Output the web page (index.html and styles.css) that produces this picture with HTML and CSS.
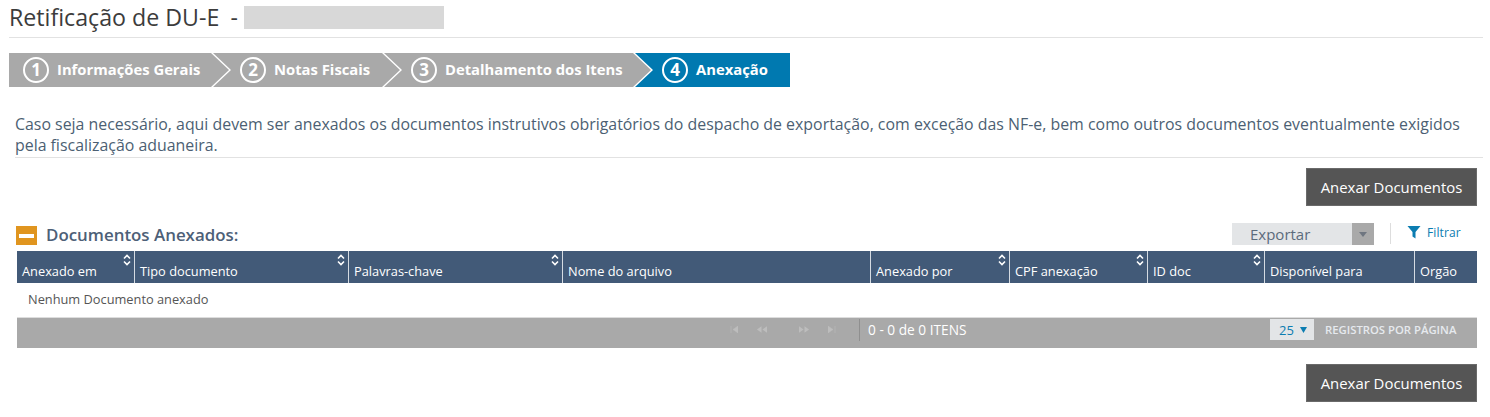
FILE: index.html
```html
<!DOCTYPE html>
<html lang="pt-BR">
<head>
<meta charset="utf-8">
<title>Retificação de DU-E</title>
<link rel="stylesheet" href="styles.css">
</head>
<body>
<svg class="defs" width="0" height="0" aria-hidden="true">
  <symbol id="sort" viewBox="0 0 8 12"><path d="M1 4.500 4 1.500 7 4.500M1 7.500 4 10.500 7 7.500" fill="none" stroke="#fff" stroke-width="1.6"/></symbol>
</svg>
<header class="page-title">
  <h1>Retificação de DU-E</h1><span class="dash">-</span><span class="redacted"></span>
</header>
<nav class="steps">
  <div class="step step-1"><span class="num">1</span><span>Informações Gerais</span></div>
  <div class="step step-2"><span class="num">2</span><span>Notas Fiscais</span></div>
  <div class="step step-3"><span class="num">3</span><span>Detalhamento dos Itens</span></div>
  <div class="step step-4"><span class="num">4</span><span>Anexação</span></div>
</nav>
<p class="intro">Caso seja necessário, aqui devem ser anexados os documentos instrutivos obrigatórios do despacho de exportação, com exceção das NF-e, bem como outros documentos eventualmente exigidos pela fiscalização aduaneira.</p>
<div class="actions"><button class="btn">Anexar Documentos</button></div>
<section class="docs">
  <div class="docs-head">
    <span class="collapse"><span></span></span>
    <h2>Documentos Anexados:</h2>
    <div class="export"><span class="export-label">Exportar</span><span class="export-arrow"><svg width="8" height="5" viewBox="0 0 8 5"><path d="M0 0h8L4 5z" fill="#6f7680"/></svg></span></div>
    <span class="vsep"></span>
    <a class="filter"><svg width="14" height="14" viewBox="0 0 14 14"><path d="M0.500 1h13L8.500 7v6.500L5.500 11.500V7z" fill="#0c7db1"/></svg>Filtrar</a>
  </div>
  <table class="grid">
    <colgroup><col class="c1"><col class="c2"><col class="c3"><col class="c4"><col class="c5"><col class="c6"><col class="c7"><col class="c8"><col class="c9"></colgroup>
    <thead>
      <tr>
        <th>Anexado em<svg class="sort"><use href="#sort"/></svg></th>
        <th>Tipo documento<svg class="sort"><use href="#sort"/></svg></th>
        <th>Palavras-chave<svg class="sort"><use href="#sort"/></svg></th>
        <th>Nome do arquivo</th>
        <th>Anexado por<svg class="sort"><use href="#sort"/></svg></th>
        <th>CPF anexação<svg class="sort"><use href="#sort"/></svg></th>
        <th>ID doc<svg class="sort"><use href="#sort"/></svg></th>
        <th>Disponível para</th>
        <th>Orgão</th>
      </tr>
    </thead>
    <tbody><tr><td colspan="9">Nenhum Documento anexado</td></tr></tbody>
  </table>
  <div class="pager">
    <div class="pager-nav">
      <svg width="8" height="7" viewBox="0 0 8 7"><path d="M1 0v7M8 0v7L3 3.500z" fill="#bdbdbd" stroke="#bdbdbd" stroke-width=".5"/></svg>
      <svg width="11" height="7" viewBox="0 0 12 7"><path d="M6 0v7L1 3.500zM12 0v7L7 3.500z" fill="#bdbdbd"/></svg>
      <svg class="gap" width="11" height="7" viewBox="0 0 12 7"><path d="M0 0v7l5-3.500zM6 0v7l5-3.500z" fill="#bdbdbd"/></svg>
      <svg width="8" height="7" viewBox="0 0 8 7"><path d="M0 0v7l5-3.500zM7 0v7" fill="#bdbdbd" stroke="#bdbdbd" stroke-width=".5"/></svg>
    </div>
    <div class="pager-info">0 - 0 de 0 ITENS</div>
    <div class="page-size"><span>25</span><svg width="7" height="6" viewBox="0 0 7 6"><path d="M0 0h7L3.500 6z" fill="#0c7db1"/></svg></div>
    <div class="page-label">REGISTROS POR PÁGINA</div>
  </div>
</section>
<div class="actions actions-bottom"><button class="btn">Anexar Documentos</button></div>
</body>
</html>
```
FILE: styles.css
```css
* { box-sizing: border-box; }
html, body { margin: 0; padding: 0; }
body {
  width: 1490px;
  height: 417px;
  overflow: hidden;
  background: #fff;
  font-family: "Open Sans", "Liberation Sans", sans-serif;
  color: #444;
  position: relative;
}
.defs { position: absolute; }
.page-title {
  display: flex;
  align-items: center;
  height: 38px;
  margin: 0 7px 0 9px;
  padding-bottom: 3px;
  border-bottom: 1px solid #e2e2e2;
}
.page-title h1 { margin: 0; font-size: 23.200px; font-weight: 400; color: #3c3c3c; }
.dash { font-size: 23px; margin-left: 11px; color: #3c3c3c; }
.redacted { width: 200px; height: 23px; margin-left: 6px; background: #d8d8d8; }
.steps { display: flex; margin: 15px 0 0 9px; height: 34px; }
.step {
  display: flex;
  align-items: center;
  height: 34px;
  color: #fff;
  font-size: 14.800px;
  line-height: 32px;
  font-weight: 700;
  background: #a9a9a9;
  margin-left: -16px;
  white-space: nowrap;
  padding-left: 27px;
  clip-path: polygon(0 0, calc(100% - 18px) 0, 100% 50%, calc(100% - 18px) 100%, 0 100%, 18px 50%);
}
.step > span:last-child { margin-top: -2px; }
.step-1 { width: 220px; margin-left: 0; padding-left: 14px; clip-path: polygon(0 0, calc(100% - 18px) 0, 100% 50%, calc(100% - 18px) 100%, 0 100%); }
.step-2 { width: 187px; }
.step-3 { width: 267px; }
.step-4 { width: 155px; background: #0079b0; clip-path: polygon(0 0, 100% 0, 100% 100%, 0 100%, 18px 50%); }
.num {
  width: 26px;
  height: 26px;
  margin-right: 8px;
  border: 2px solid #fff;
  border-radius: 50%;
  display: flex;
  align-items: center;
  justify-content: center;
  font-size: 17px;
  line-height: 22px;
  flex: none;
}
.intro {
  margin: 27px 7px 0 15px;
  height: 43px;
  font-size: 15.900px;
  line-height: 21px;
  color: #4c5f73;
}
.actions { display: flex; justify-content: flex-end; padding-right: 13px; }
.intro + .actions { padding-top: 10px; border-top: 1px solid #e2e2e2; margin-left: 15px; margin-right: 7px; padding-right: 6px; }
.btn {
  width: 171px;
  height: 38px;
  border: 1px solid #6a6a6a;
  background: #555;
  color: #fff;
  font: 400 14.900px "Open Sans", "Liberation Sans", sans-serif;
  padding: 0;
}
.docs { margin: 0 13px 0 17px; }
.docs-head { display: flex; align-items: center; height: 45px; }
.collapse {
  width: 21px;
  height: 19px;
  margin-left: -1px;
  background: #e0951f;
  display: flex;
  align-items: center;
  justify-content: center;
  margin-top: 14px;
}
.collapse span { width: 15px; height: 4px; background: #fff; }
.docs-head h2 {
  margin: 12px 0 0 9px;
  font-size: 16.900px;
  font-weight: 600;
  color: #4d6077;
  flex: 1;
}
.export { display: flex; width: 142px; height: 22px; margin-top: 11px; background: #e3e5e7; }
.export-label { flex: 1; padding-left: 18px; font-size: 15px; line-height: 23px; color: #5b6b7c; }
.export-arrow { width: 22px; background: #a9a9a9; display: flex; align-items: center; justify-content: center; }
.vsep { width: 1px; height: 21px; margin: 9px 0 0 16px; background: #ddd; }
.filter {
  display: flex;
  align-items: center;
  gap: 6px;
  width: 86px;
  margin-top: 7px;
  padding-left: 16px;
  font-size: 12px;
  color: #0c7db1;
  letter-spacing: .1px;
}
.grid { width: 1460px; table-layout: fixed; border-collapse: separate; border-spacing: 0; }
.c1 { width: 117px; } .c2 { width: 214px; } .c3 { width: 214px; }
.c4 { width: 308px; } .c5 { width: 139px; } .c6 { width: 138px; }
.c7 { width: 117px; } .c8 { width: 150px; } .c9 { width: 63px; }
th {
  position: relative;
  height: 32px;
  padding: 8px 0 0 5px;
  background: #425a78;
  color: #fff;
  font-size: 12.800px;
  font-weight: 400;
  text-align: left;
  border-left: 1px solid #d5dbe2;
  white-space: nowrap;
}
th:first-child { border-left: 0; }
.sort { position: absolute; top: 3px; right: 3px; width: 8px; height: 12px; }
td { height: 34px; padding: 0 0 2px 11px; font-size: 12.800px; color: #555; }
.pager {
  display: flex;
  align-items: center;
  height: 31px;
  padding-bottom: 7px;
  background: #a9a9a9;
  border-top: 1px solid #ddd;
  color: #fff;
}
.pager-nav { display: flex; align-items: center; gap: 18px; margin-left: 713px; width: 130px; height: 22px; border-right: 1px solid #8f8f8f; }
.pager-nav .gap { margin-left: 14px; }
.pager-info { margin-left: 8px; font-size: 13.700px; font-weight: 400; width: 402px; }
.page-size {
  display: flex;
  align-items: center;
  gap: 6px;
  width: 44px;
  height: 21px;
  padding-left: 9px;
  background: #e3e5e7;
  color: #0c7db1;
  font-size: 13px;
}
.page-label { margin-left: 11px; font-size: 11.300px; font-weight: 600; color: #e6e9ee; }
.actions-bottom { margin-top: 16px; }
```
